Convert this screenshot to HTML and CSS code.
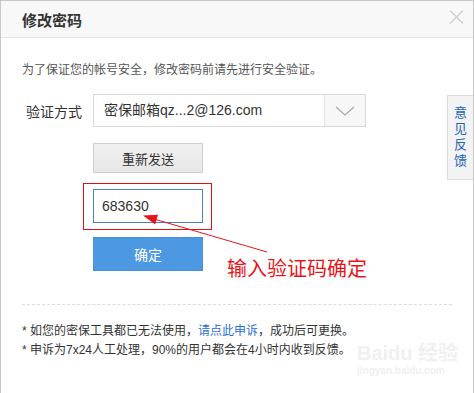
FILE: index.html
```html
<!DOCTYPE html>
<html lang="zh-CN">
<head>
    <meta charset="UTF-8">
    <title>修改密码</title>
    <link rel="stylesheet" href="styles.css">
</head>
<body>
    <div class="dialog">
        <div class="dialogHead">
            <h2>修改密码</h2>
            <svg class="closeBtn" width="15" height="14" viewBox="0 0 15 14">
                <path d="M1 0.5 L14 13.5 M14 0.5 L1 13.5" stroke="#cfcfcf" stroke-width="1.4" fill="none"/>
            </svg>
        </div>
        <div class="dialogBody">
            <p class="intro">为了保证您的帐号安全，修改密码前请先进行安全验证。</p>
            <div class="formRow">
                <label class="rowLabel">验证方式</label>
                <div class="selectBox">
                    <span class="selectText">密保邮箱qz...2@126.com</span>
                    <span class="selectArrow">
                        <svg width="20" height="10" viewBox="0 0 20 10">
                            <path d="M1 1 L10 9 L19 1" stroke="#a8a8a8" stroke-width="1.2" fill="none"/>
                        </svg>
                    </span>
                </div>
            </div>
            <div class="formCol">
                <button class="btnGray">重新发送</button>
                <div class="markBox">
                    <div class="codeInput">683630</div>
                </div>
                <div class="confirmRow">
                    <button class="btnBlue">确定</button>
                    <span class="note">输入验证码确定</span>
                </div>
            </div>
            <div class="divider"></div>
            <div class="tips">
                <p>* 如您的密保工具都已无法使用，<a href="#">请点此申诉</a>，成功后可更换。</p>
                <p>* 申诉为7x24人工处理，90%的用户都会在4小时内收到反馈。</p>
            </div>
        </div>
        <svg class="arrow" width="140" height="50" viewBox="130 205 140 50">
            <line x1="267" y1="252" x2="154" y2="219" stroke="#e8141a" stroke-width="1"/>
            <polygon points="143,215.5 158,214.8 155.2,224.5" fill="#e8141a"/>
        </svg>
        <div class="feedback">意见反馈</div>
        <div class="watermark">
            <span class="wmBig">Baidu 经验</span>
            <span class="wmSmall">jingyan.baidu.com</span>
        </div>
    </div>
</body>
</html>
```

FILE: styles.css
```css
html,body{
    margin: 0;
    padding: 0;
    background: #fff;
}
body{
    font-family: "Liberation Sans", "Noto Sans CJK SC", sans-serif;
    color: #333;
}
.dialog{
    position: relative;
    width: 472px;
    height: 392px;
    border: 1px solid #c8c8c8;
    border-bottom: none;
    overflow: hidden;
}
.dialogHead{
    height: 36px;
    background: #f8f8f8;
    border-bottom: 1px solid #e6e6e6;
    display: flex;
    align-items: center;
    justify-content: space-between;
    padding: 0 9px 0 21px;
}
.dialogHead h2{
    margin: 0;
    font-size: 15px;
    font-weight: bold;
    color: #333;
}
.closeBtn{
    margin-top: -4px;
}
.dialogBody{
    padding: 0 21px;
}
.intro{
    margin: 23px 0 0;
    font-size: 12px;
    line-height: 18px;
    color: #555;
}
.formRow{
    display: flex;
    align-items: center;
    margin-top: 15px;
}
.rowLabel{
    width: 67px;
    padding-left: 4px;
    font-size: 14px;
    color: #333;
}
.selectBox{
    display: flex;
    width: 271px;
    height: 31px;
    border: 1px solid #d9d9d9;
}
.selectText{
    flex: 1;
    padding-left: 10px;
    line-height: 31px;
    font-size: 14px;
    color: #333;
    border-right: 1px solid #e2e2e2;
}
.selectArrow{
    width: 40px;
    background: #f7f7f7;
    display: flex;
    align-items: center;
    justify-content: center;
}
.formCol{
    margin-left: 71px;
    display: flex;
    flex-direction: column;
    align-items: flex-start;
}
.btnGray{
    margin-top: 16px;
    width: 110px;
    height: 30px;
    border: 1px solid #cfcfcf;
    background: linear-gradient(#f2f2f2, #e6e6e6);
    font-family: inherit;
    font-size: 13px;
    color: #333;
    padding: 0;
}
.markBox{
    margin: 10px 0 0 -10px;
    padding: 5px 8px 6px 9px;
    border: 1px solid #e30f12;
}
.codeInput{
    width: 100px;
    height: 32px;
    border: 1px solid #4a80c6;
    padding-left: 8px;
    line-height: 32px;
    font-size: 14px;
    color: #333;
}
.confirmRow{
    display: flex;
    align-items: flex-end;
    margin-top: 7px;
}
.btnBlue{
    width: 110px;
    height: 34px;
    border: 1px solid #4a8fd8;
    background: #4c98e2;
    color: #fff;
    font-family: inherit;
    font-size: 14px;
    padding: 0;
}
.note{
    margin: 0 0 -11px 24px;
    font-size: 20px;
    line-height: 26px;
    color: #e8141a;
}
.divider{
    margin-top: 33px;
    border-top: 1px dashed #dcdcdc;
}
.tips{
    margin-top: 17px;
}
.tips p{
    margin: 0;
    font-size: 12px;
    line-height: 19px;
    color: #333;
}
.tips a{
    color: #2b6fd5;
    text-decoration: none;
}
.arrow{
    position: absolute;
    left: 129px;
    top: 204px;
}
.feedback{
    position: absolute;
    right: 0;
    top: 94px;
    width: 13px;
    height: 66px;
    padding: 9px 6px 8px 6px;
    background: #f3f3f3;
    border: 1px solid #dcdcdc;
    border-right: none;
    font-size: 13px;
    line-height: 16px;
    color: #1e62b8;
    text-align: center;
    word-break: break-all;
}
.watermark{
    position: absolute;
    left: 356px;
    top: 340px;
    display: flex;
    flex-direction: column;
    color: #f0f0f0;
    font-weight: bold;
}
.wmBig{
    font-size: 20px;
    line-height: 24px;
}
.wmSmall{
    font-size: 10px;
    line-height: 12px;
}
```
